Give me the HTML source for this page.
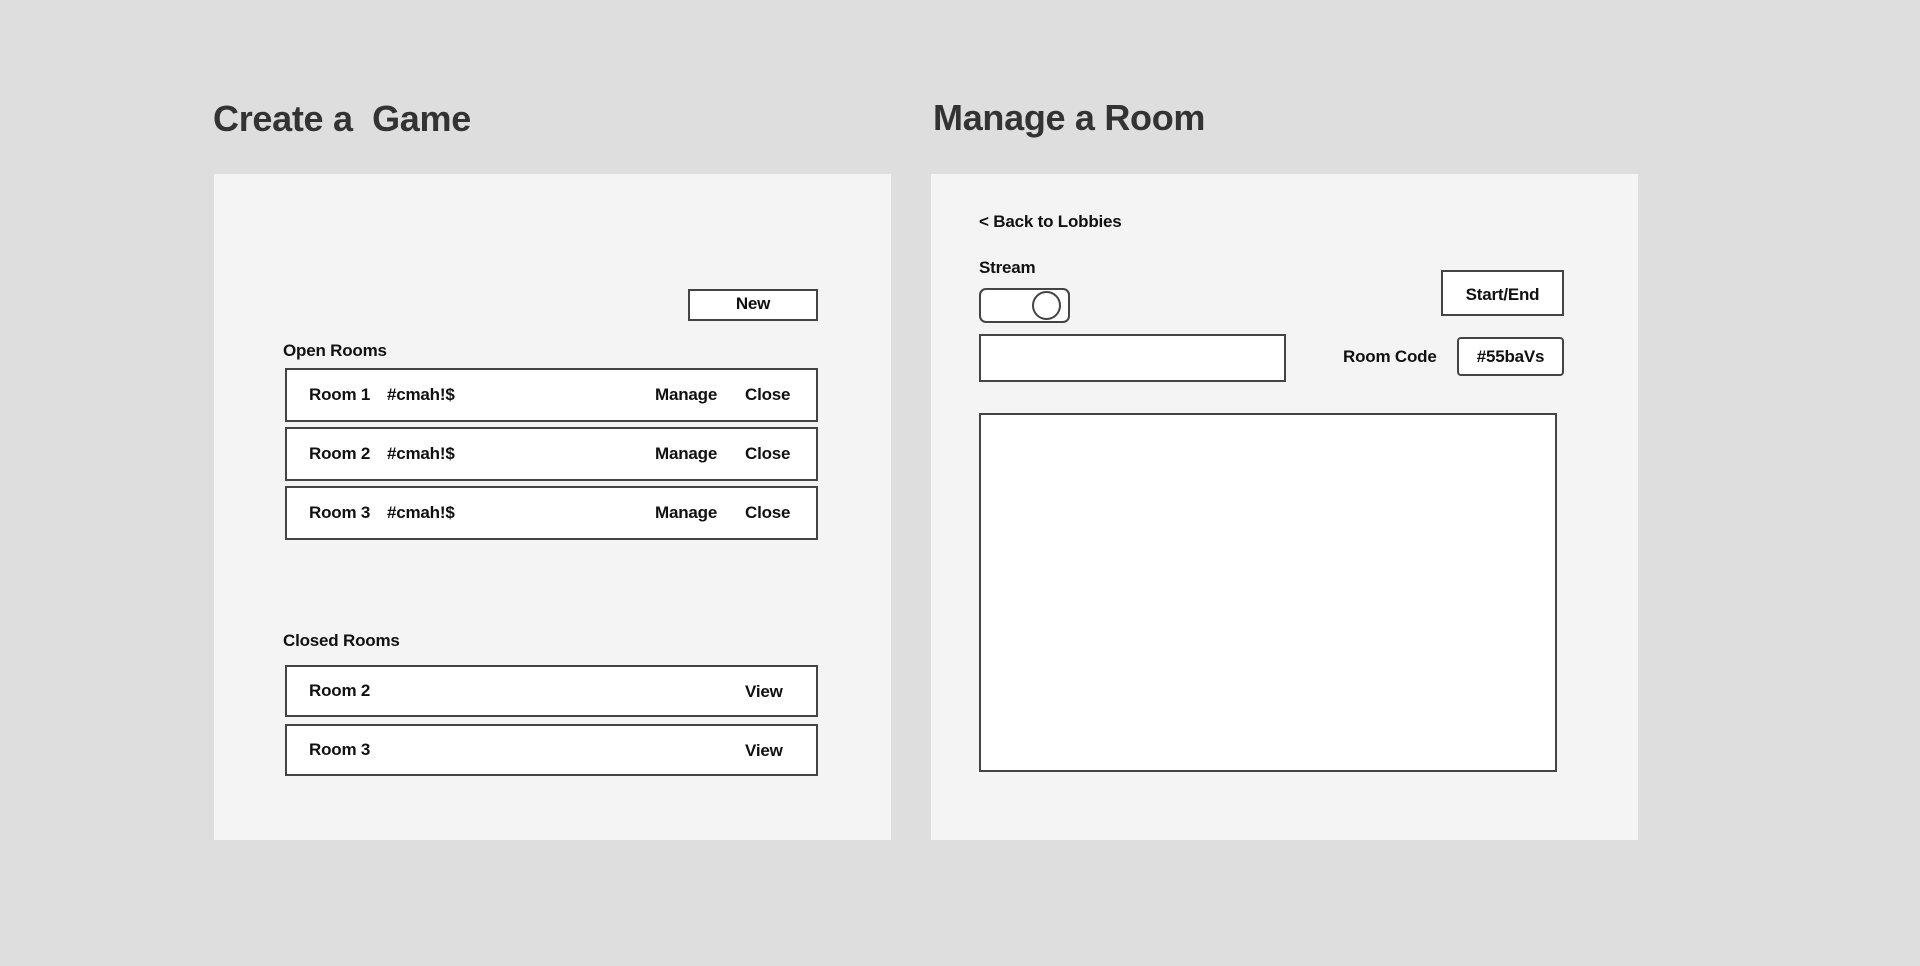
<!DOCTYPE html>
<html><head><meta charset="utf-8"><style>
*{margin:0;padding:0;box-sizing:border-box}
body{width:1920px;height:966px;background:#dedede;position:relative;overflow:hidden;font-family:"Liberation Sans",Arial,sans-serif;color:#111}
.abs{position:absolute}
.title{font-size:36px;font-weight:bold;color:#333;letter-spacing:-0.3px;line-height:40px}
.panel{background:#f4f4f4}
.box{border:2px solid #444;background:#fff}
.t{font-size:17px;font-weight:bold;line-height:20px;white-space:nowrap;letter-spacing:-0.2px}
</style></head><body>
<div class="abs title" style="left:213px;top:99px">Create a&nbsp; Game</div>
<div class="abs title" style="left:933px;top:98px">Manage a Room</div>

<div class="abs panel" style="left:214px;top:174px;width:677px;height:666px"></div>
<div class="abs panel" style="left:931px;top:174px;width:707px;height:666px"></div>

<div class="abs box" style="left:688px;top:289px;width:130px;height:32px"></div>
<div class="abs t" style="left:688px;top:294px;width:130px;text-align:center">New</div>

<div class="abs t" style="left:283px;top:341px">Open Rooms</div>

<div class="abs box" style="left:285px;top:368px;width:533px;height:54px"></div>
<div class="abs t" style="left:309px;top:385px">Room 1</div><div class="abs t" style="left:387px;top:385px">#cmah!$</div><div class="abs t" style="left:655px;top:385px">Manage</div><div class="abs t" style="left:745px;top:385px">Close</div>

<div class="abs box" style="left:285px;top:427px;width:533px;height:54px"></div>
<div class="abs t" style="left:309px;top:444px">Room 2</div><div class="abs t" style="left:387px;top:444px">#cmah!$</div><div class="abs t" style="left:655px;top:444px">Manage</div><div class="abs t" style="left:745px;top:444px">Close</div>

<div class="abs box" style="left:285px;top:486px;width:533px;height:54px"></div>
<div class="abs t" style="left:309px;top:503px">Room 3</div><div class="abs t" style="left:387px;top:503px">#cmah!$</div><div class="abs t" style="left:655px;top:503px">Manage</div><div class="abs t" style="left:745px;top:503px">Close</div>

<div class="abs t" style="left:283px;top:631px">Closed Rooms</div>
<div class="abs box" style="left:285px;top:665px;width:533px;height:52px"></div>
<div class="abs t" style="left:309px;top:681px">Room 2</div><div class="abs t" style="left:745px;top:682px">View</div>
<div class="abs box" style="left:285px;top:724px;width:533px;height:52px"></div>
<div class="abs t" style="left:309px;top:740px">Room 3</div><div class="abs t" style="left:745px;top:741px">View</div>

<div class="abs t" style="left:979px;top:212px">&lt; Back to Lobbies</div>
<div class="abs t" style="left:979px;top:258px">Stream</div>
<div class="abs box" style="left:979px;top:288px;width:91px;height:35px;border-radius:7px"></div>
<div class="abs" style="left:1032px;top:291px;width:29px;height:29px;border:2px solid #444;border-radius:50%;background:#fff"></div>
<div class="abs box" style="left:979px;top:334px;width:307px;height:48px"></div>

<div class="abs box" style="left:1441px;top:270px;width:123px;height:46px"></div>
<div class="abs t" style="left:1441px;top:285px;width:123px;text-align:center">Start/End</div>
<div class="abs t" style="left:1343px;top:347px">Room Code</div>
<div class="abs box" style="left:1457px;top:337px;width:107px;height:39px;border-radius:4px"></div>
<div class="abs t" style="left:1457px;top:347px;width:107px;text-align:center">#55baVs</div>

<div class="abs box" style="left:979px;top:413px;width:578px;height:359px"></div>
</body></html>
